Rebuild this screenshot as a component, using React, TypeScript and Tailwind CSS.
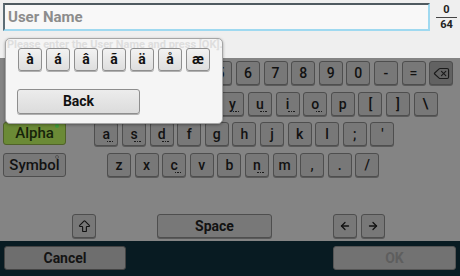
import React from 'react';
import { ArrowBigUp, ArrowLeft, ArrowRight, Delete } from 'lucide-react';

const font = { fontFamily: 'Roboto, "Noto Sans", sans-serif' };

type KeyProps = { label?: React.ReactNode; dots?: boolean; wide?: string; dark?: boolean };

const Key: React.FC<KeyProps> = ({ label, dots, wide, dark }) => (
  <div
    className={`relative flex h-[24px] shrink-0 items-center justify-center rounded-[3px] border border-[#4e4e4e] text-[14px] font-medium text-[#121212] shadow-[0_1px_0_#5a5a5a] ${
      dark ? 'bg-[#626262]' : 'bg-[#787878]'
    } ${wide ?? 'w-[24px]'}`}
  >
    {label}
    {dots && (
      <span className="absolute bottom-[3px] right-[4px] flex gap-[1px]">
        <span className="h-[1.5px] w-[1.5px] bg-[#1a1a1a]" />
        <span className="h-[1.5px] w-[1.5px] bg-[#1a1a1a]" />
        <span className="h-[1.5px] w-[1.5px] bg-[#1a1a1a]" />
      </span>
    )}
  </div>
);

const row1 = ['`', '1', '2', '3', '4', '5', '6', '7', '8', '9', '0', '-', '='];
const row2: [string, boolean][] = [
  ['q', false], ['w', false], ['e', true], ['r', false], ['t', false], ['y', true], ['u', true],
  ['i', true], ['o', true], ['p', false], ['[', false], [']', false], ['\\', false],
];
const row3: [string, boolean][] = [
  ['a', true], ['s', true], ['d', true], ['f', false], ['g', false], ['h', false],
  ['j', false], ['k', false], ['l', false], [';', false], ["'", false],
];
const row4: [string, boolean][] = [
  ['z', false], ['x', false], ['c', true], ['v', false], ['b', false], ['n', true],
  ['m', false], [',', false], ['.', false], ['/', false],
];
const accents = ['à', 'á', 'â', 'ã', 'ä', 'å', 'æ'];

const App: React.FC = () => {
  return (
    <div className="relative flex h-[276px] w-[460px] flex-col overflow-hidden bg-[#efefef]" style={font}>
      {/* Input + counter */}
      <div className="flex h-[32px] shrink-0 bg-[#efefef]">
        <div className="ml-[3px] mt-[3px] flex h-[28px] w-[427px] items-center border-2 border-t-[#4f5a60] border-l-[#5d6d75] border-r-[#9fd9f0] border-b-[#9fd9f0] bg-[#f8f8f8] pl-[3px]">
          <span className="text-[15px] font-bold text-[#8c8c8c]">User Name</span>
        </div>
        <div className="ml-[6px] mt-[4px] flex w-[21px] flex-col items-center text-[11px] font-bold leading-[12px] text-[#222]">
          <span>0</span>
          <div className="my-[1px] h-px w-full bg-[#444]" />
          <span>64</span>
        </div>
      </div>

      {/* Hint area */}
      <div className="h-[26px] shrink-0 bg-[#efefef]" />

      {/* Keyboard (dimmed) */}
      <div className="flex h-[183px] shrink-0 flex-col bg-[#848484]">
        <div className="mt-[3px] flex gap-[3.6px] pl-[70.4px]">
          {row1.map((k) => (
            <Key key={k} label={k} />
          ))}
          <Key dark label={<Delete size={17} strokeWidth={1.6} className="text-[#1a1a1a]" />} />
        </div>
        <div className="mt-[7px] flex gap-[3.6px] pl-[82.4px]">
          {row2.map(([k, d]) => (
            <Key key={k} label={k} dots={d} />
          ))}
        </div>
        <div className="mt-[6px] flex gap-[3.6px] pl-[3px]">
          <div className="relative mr-[24.8px] flex h-[23px] w-[63px] shrink-0 items-center justify-center rounded-[3px] border border-[#4f6128] bg-[#6b8a36] text-[15px] font-medium text-[#16230a]">
            Alpha
            <span className="absolute right-[6px] top-[1px] h-[4px] w-[4px] rounded-full bg-[#3f9a3a]" />
          </div>
          {row3.map(([k, d]) => (
            <Key key={k} label={k} dots={d} />
          ))}
        </div>
        <div className="mt-[7px] flex gap-[3.6px] pl-[3px]">
          <div className="relative mr-[37.4px] flex h-[24px] w-[63px] shrink-0 items-center justify-center rounded-[3px] border border-[#4e4e4e] bg-[#787878] text-[15px] font-medium text-[#121212]">
            Symbol
            <span className="absolute right-[6px] top-[1px] h-[4px] w-[4px] rounded-full border border-[#555]" />
          </div>
          {row4.map(([k, d]) => (
            <Key key={k} label={k} dots={d} />
          ))}
        </div>
        <div className="mt-[37px] flex pl-[72px]">
          <Key label={<ArrowBigUp size={15} strokeWidth={1.8} />} />
          <div className="ml-[61px]">
            <Key wide="w-[115px]" label={<span className="font-bold">Space</span>} />
          </div>
          <div className="ml-[61px] flex gap-[4px]">
            <Key label={<ArrowLeft size={12} strokeWidth={2.6} />} />
            <Key label={<ArrowRight size={12} strokeWidth={2.6} />} />
          </div>
        </div>
      </div>

      {/* Bottom bar */}
      <div className="flex h-[35px] shrink-0 items-start justify-between bg-[#081b22] px-[4px] pt-[5px]">
        <div className="flex h-[24px] w-[122px] items-center justify-center rounded-[3px] border border-[#444] bg-[#6e6e6e] text-[14px] font-bold text-[#141414]">
          Cancel
        </div>
        <div className="flex h-[24px] w-[123px] items-center justify-center rounded-[3px] border border-[#555] bg-[#727272] text-[14px] font-bold text-[#5e5e5e]">
          OK
        </div>
      </div>

      {/* Accent popup */}
      <div className="absolute left-[5px] top-[38px] h-[86px] w-[218px] overflow-hidden rounded-[5px] border border-[#a5a5a5] bg-[#f5f5f5] shadow-[0_1px_3px_rgba(0,0,0,0.35)]">
        <div className="absolute left-[1px] top-[1px] whitespace-nowrap text-[11px] leading-[9px] font-bold text-[#dedede]">
          Please enter the User Name and press [OK].
        </div>
        <div className="relative ml-[12px] mt-[9px] flex gap-[4px]">
          {accents.map((a) => (
            <div
              key={a}
              className="flex h-[23px] w-[24px] items-center justify-center rounded-[3px] border border-[#8e8e8e] bg-gradient-to-b from-[#f2f2f2] to-[#dedede] text-[14px] font-bold text-[#111] shadow-[0_1px_0_#b0b0b0]"
            >
              {a}
            </div>
          ))}
        </div>
        <div className="relative ml-[11px] mt-[18px] flex h-[25px] w-[123px] items-center justify-center rounded-[3px] border border-[#8e8e8e] bg-gradient-to-b from-[#ececec] to-[#dcdcdc] text-[14px] font-bold text-[#111] shadow-[0_1px_0_#b0b0b0]">
          Back
        </div>
      </div>
    </div>
  );
};

export default App;
